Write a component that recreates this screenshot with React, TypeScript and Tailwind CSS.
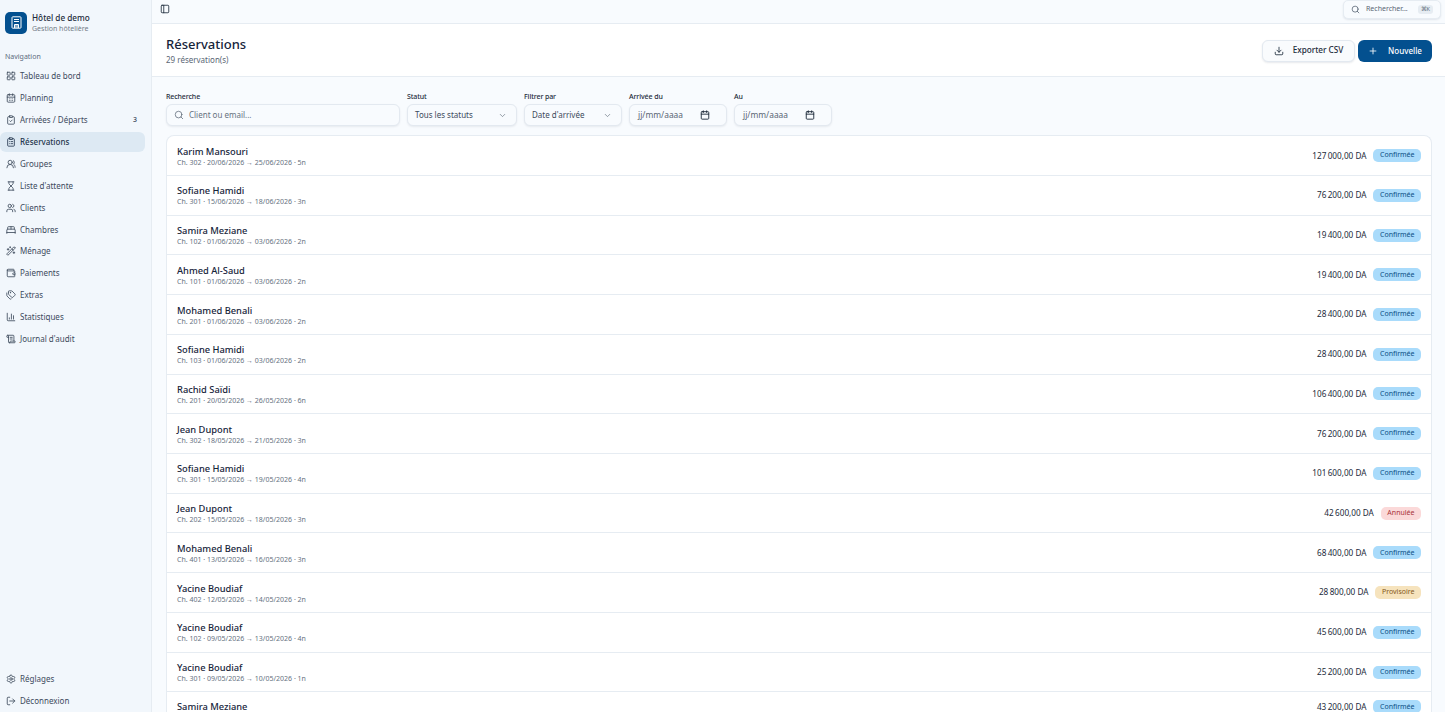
import { BedDouble, Calendar, CalendarDays, ChartColumn, ChevronDown, ClipboardCheck, ClipboardList, Download, Hourglass, LayoutGrid, LogOut, PanelLeft, Plus, ScrollText, Search, Settings, Tags, Users, UsersRound, Wallet, WandSparkles } from "lucide-react";

const nav = [
  { label: "Tableau de bord", Icon: LayoutGrid },
  { label: "Planning", Icon: CalendarDays },
  { label: "Arrivées / Départs", Icon: ClipboardCheck, badge: "3" },
  { label: "Réservations", Icon: ClipboardList, active: true },
  { label: "Groupes", Icon: UsersRound },
  { label: "Liste d'attente", Icon: Hourglass },
  { label: "Clients", Icon: Users },
  { label: "Chambres", Icon: BedDouble },
  { label: "Ménage", Icon: WandSparkles },
  { label: "Paiements", Icon: Wallet },
  { label: "Extras", Icon: Tags },
  { label: "Statistiques", Icon: ChartColumn },
  { label: "Journal d'audit", Icon: ScrollText },
];

const rows: [string, string, string, string][] = [
  ["Karim Mansouri", "Ch. 302 · 20/06/2026 → 25/06/2026 · 5n", "127\u202f000,00 DA", "c"],
  ["Sofiane Hamidi", "Ch. 301 · 15/06/2026 → 18/06/2026 · 3n", "76\u202f200,00 DA", "c"],
  ["Samira Meziane", "Ch. 102 · 01/06/2026 → 03/06/2026 · 2n", "19\u202f400,00 DA", "c"],
  ["Ahmed Al-Saud", "Ch. 101 · 01/06/2026 → 03/06/2026 · 2n", "19\u202f400,00 DA", "c"],
  ["Mohamed Benali", "Ch. 201 · 01/06/2026 → 03/06/2026 · 2n", "28\u202f400,00 DA", "c"],
  ["Sofiane Hamidi", "Ch. 103 · 01/06/2026 → 03/06/2026 · 2n", "28\u202f400,00 DA", "c"],
  ["Rachid Saïdi", "Ch. 201 · 20/05/2026 → 26/05/2026 · 6n", "106\u202f400,00 DA", "c"],
  ["Jean Dupont", "Ch. 302 · 18/05/2026 → 21/05/2026 · 3n", "76\u202f200,00 DA", "c"],
  ["Sofiane Hamidi", "Ch. 301 · 15/05/2026 → 19/05/2026 · 4n", "101\u202f600,00 DA", "c"],
  ["Jean Dupont", "Ch. 202 · 15/05/2026 → 18/05/2026 · 3n", "42\u202f600,00 DA", "a"],
  ["Mohamed Benali", "Ch. 401 · 13/05/2026 → 16/05/2026 · 3n", "68\u202f400,00 DA", "c"],
  ["Yacine Boudiaf", "Ch. 402 · 12/05/2026 → 14/05/2026 · 2n", "28\u202f800,00 DA", "p"],
  ["Yacine Boudiaf", "Ch. 102 · 09/05/2026 → 13/05/2026 · 4n", "45\u202f600,00 DA", "c"],
  ["Yacine Boudiaf", "Ch. 301 · 09/05/2026 → 10/05/2026 · 1n", "25\u202f200,00 DA", "c"],
];

function Badge({ kind }: { kind: string }) {
  if (kind === "a") return <span className="flex h-[13px] items-center rounded-[5px] bg-[#fbd9d9] px-[6.5px] text-[7px] text-[#a8323a]">Annulée</span>;
  if (kind === "p") return <span className="flex h-[13px] items-center rounded-[5px] bg-[#f6e3bd] px-[6.5px] text-[7px] text-[#85591a]">Provisoire</span>;
  return <span className="flex h-[13px] items-center rounded-[5px] bg-[#a9dbfb] px-[6.5px] text-[7px] text-[#0b4f85]">Confirmée</span>;
}

function NavItem({ label, Icon, active, badge }: { label: string; Icon: typeof Plus; active?: boolean; badge?: string }) {
  return (
    <div className={`flex h-[20px] items-center gap-[4px] rounded-[6px] pl-[6px] pr-[6px] text-[8px] text-[#3d4a5c] ${active ? "bg-[#dde9f3] font-medium text-[#24364d]" : ""}`}>
      <Icon size={10} strokeWidth={2} className="shrink-0" />
      <span className="flex-1">{label}</span>
      {badge && <span className="pr-[2px] text-[7px] font-medium">{badge}</span>}
    </div>
  );
}

function Field({ label, width, children }: { label: string; width: string; children: React.ReactNode }) {
  return (
    <div className={`flex flex-col gap-[2px] ${width}`}>
      <span className="text-[7px] font-medium leading-[10px] tracking-[-0.1px] text-[#1c2a3a]">{label}</span>
      <div className="flex h-[22px] items-center rounded-[6px] border border-[#e3e9f0] bg-[#f8fbfe] px-[7px] text-[8px] text-[#3d4a5c] shadow-[0_1px_2px_rgba(20,40,70,0.08)]">
        {children}
      </div>
    </div>
  );
}

function DateField({ label }: { label: string }) {
  return (
    <Field label={label} width="w-[98px]">
      <span className="ml-[1px] flex-1 text-[8.4px] text-[#5a6675]">jj/mm/aaaa</span>
      <Calendar size={10} strokeWidth={2.2} className="mr-[9px] text-[#1c2a3a]" />
    </Field>
  );
}

export default function App() {
  return (
    <div className="flex h-screen overflow-hidden bg-[#f8fbfe] font-['Noto_Sans','Open_Sans',sans-serif] text-[#16243a]">
      <aside className="flex w-[152px] shrink-0 flex-col border-r border-[#e6ecf2] bg-[#f2f7fc]">
        <div className="flex h-[44px] items-center gap-[5px] px-[5px] pt-[1px]">
          <div className="flex h-[22px] w-[22px] items-center justify-center rounded-[5px] bg-[#03508f] text-white">
            <svg width="11" height="13" viewBox="0 0 11 13" fill="none" stroke="currentColor" strokeWidth="1">
              <rect x="1" y="0.8" width="9" height="11.4" rx="0.8" />
              <path d="M3 3.5h5M3 5.5h5" />
              <path d="M3.5 12V8.5h4V12" fill="currentColor" fillOpacity="0.5" />
            </svg>
          </div>
          <div className="flex flex-col">
            <span className="text-[8.2px] font-medium leading-[12px] text-[#1c2a3a]">Hôtel de demo</span>
            <span className="text-[7px] leading-[10px] text-[#727c87]">Gestion hôtelière</span>
          </div>
        </div>
        <div className="mt-[7px] px-[5px] text-[7px] leading-[12px] text-[#5c6b7c]">Navigation</div>
        <nav className="mt-[3.2px] flex flex-col gap-[1.92px] pr-[6px]">
          {nav.map((n) => <NavItem key={n.label} {...n} />)}
        </nav>
        <div className="mt-auto flex flex-col gap-[2px] pb-[1px] pr-[6px]">
          <NavItem label="Réglages" Icon={Settings} />
          <NavItem label="Déconnexion" Icon={LogOut} />
        </div>
      </aside>

      <main className="flex min-w-0 flex-1 flex-col">
        <header className="flex h-[24px] shrink-0 items-start justify-between border-b border-[#e6ecf2] pl-[8px] pr-[4px]">
          <PanelLeft size={10} strokeWidth={2} className="mt-[4px] text-[#1c2a3a]" />
          <div className="flex h-[19px] w-[98px] items-center gap-[6px] rounded-[5px] border border-[#e6ecf2] bg-[#f8fbfe] px-[7px] text-[7px] text-[#5a6675] shadow-[0_1px_2px_rgba(20,40,70,0.1)]">
            <Search size={9} strokeWidth={1.8} className="text-[#3d4a5c]" />
            <span className="flex-1">Rechercher...</span>
            <span className="rounded-[3px] bg-[#e6ecf2] px-[3px] text-[5.5px] leading-[9px]">⌘K</span>
          </div>
        </header>

        <div className="flex h-[53px] shrink-0 items-center justify-between border-b border-[#e6ecf2] bg-white pl-[14px] pr-[13px]">
          <div className="flex flex-col gap-[1px]">
            <h1 className="text-[13px] font-medium leading-[18px] text-[#16243a]">Réservations</h1>
            <p className="text-[8px] leading-[11px] text-[#5a6675]">29 réservation(s)</p>
          </div>
          <div className="mt-[1px] flex items-center gap-[3px]">
            <button className="flex h-[22px] w-[93px] items-center justify-center gap-[9px] rounded-[6px] border border-[#e3e9f0] bg-[#f9fbfd] text-[8.2px] font-medium text-[#1c2a3a] shadow-[0_1px_2px_rgba(20,40,70,0.1)]">
              <Download size={10} strokeWidth={2} />Exporter CSV
            </button>
            <button className="flex h-[22px] w-[74px] items-center justify-center gap-[10px] rounded-[6px] bg-[#03508f] text-[8px] font-medium text-white">
              <Plus size={10} strokeWidth={2} />Nouvelle
            </button>
          </div>
        </div>

        <div className="flex min-h-0 flex-1 flex-col overflow-hidden pl-[14px] pr-[13px] pt-[15px]">
          <div className="flex gap-[7px]">
            <Field label="Recherche" width="w-[234px]">
              <Search size={10} strokeWidth={1.8} className="mr-[5px] text-[#5a6675]" />
              <span className="text-[#66727f]">Client ou email...</span>
            </Field>
            <Field label="Statut" width="w-[110px]">
              <span className="flex-1">Tous les statuts</span>
              <ChevronDown size={9} strokeWidth={1.8} className="mr-[2px] text-[#66727f]" />
            </Field>
            <Field label="Filtrer par" width="w-[98px]">
              <span className="flex-1">Date d'arrivée</span>
              <ChevronDown size={9} strokeWidth={1.8} className="mr-[2px] text-[#66727f]" />
            </Field>
            <DateField label="Arrivée du" />
            <DateField label="Au" />
          </div>

          <div className="mt-[9.3px] overflow-hidden rounded-t-[8px] border border-b-0 border-[#e6ecf2] bg-white">
            {rows.map((r, i) => (
              <div key={i} className="flex h-[39.72px] items-center justify-between border-b border-[#e6ecf2] pl-[10px] pr-[10px]">
                <div className="flex flex-col pt-[1px]">
                  <span className="text-[9.3px] font-medium leading-[13px] text-[#16243a]">{r[0]}</span>
                  <span className="text-[7px] leading-[10px] text-[#66727f]">{r[1]}</span>
                </div>
                <div className="flex items-center gap-[7px]">
                  <span className="text-[8.2px] text-[#1c2a3a]">{r[2]}</span>
                  <Badge kind={r[3]} />
                </div>
              </div>
            ))}
            <div className="flex h-[39.72px] items-start justify-between pl-[10px] pr-[10px] pt-[8px]">
              <span className="text-[9.3px] font-medium leading-[13px] text-[#16243a]">Samira Meziane</span>
              <div className="flex items-center gap-[7px]">
                <span className="text-[8.2px] text-[#1c2a3a]">43{"\u202f"}200,00 DA</span>
                <Badge kind="c" />
              </div>
            </div>
          </div>
        </div>
      </main>
    </div>
  );
}
